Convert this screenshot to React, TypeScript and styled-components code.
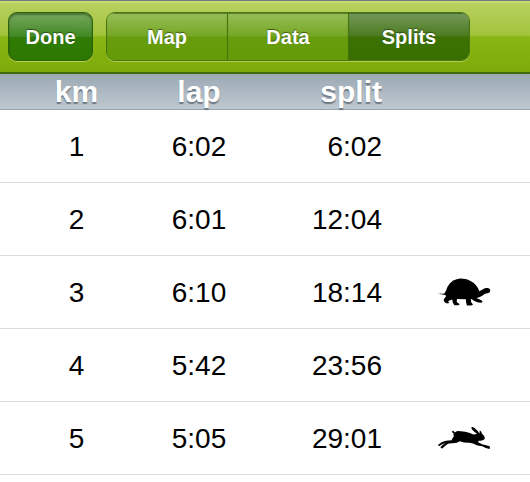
import React, { useState } from "react";
import styled, { createGlobalStyle, css } from "styled-components";

const GlobalStyle = createGlobalStyle`
  body {
    margin: 0;
    background: #fff;
    color: #000;
    font-family: "Liberation Sans", Arial, Helvetica, sans-serif;
  }
`;

const Toolbar = styled.header`
  display: flex;
  align-items: flex-start;
  gap: 13px;
  box-sizing: border-box;
  height: 74px;
  padding: 11px 8px 0;
  border-top: 1px solid #6f7b7c;
  border-bottom: 2px solid #426a0c;
  background: linear-gradient(#c8dd7c 0, #b7d05e 3px, #a2c43c 34px, #8ab512 36px, #7eab0b 100%);
`;

const buttonText = css`
  padding: 0;
  color: #fff;
  font-family: inherit;
  font-size: 20px;
  font-weight: bold;
  line-height: 24px;
  text-shadow: 0 -1px 1px rgba(20, 50, 0, 0.65);
  cursor: pointer;
`;

const DoneButton = styled.button`
  ${buttonText}
  box-sizing: border-box;
  width: 85px;
  height: 49px;
  border: 1px solid #2c6209;
  border-radius: 9px;
  background: linear-gradient(#78a75f, #418824 50%, #2f7b05 52%, #2d7800);
  box-shadow: inset 0 2px 2px rgba(20, 50, 0, 0.45), 0 1px 0 rgba(205, 225, 120, 0.65);
`;

const Segments = styled.div`
  display: flex;
  flex: 0 1 364px;
  box-sizing: border-box;
  height: 49px;
  overflow: hidden;
  border: 1px solid #497511;
  border-radius: 9px;
  box-shadow: 0 1px 0 rgba(205, 225, 120, 0.65);
`;

const Segment = styled.button<{ $active: boolean }>`
  ${buttonText}
  flex: 1;
  border: 0;
  background: ${({ $active }) =>
    $active
      ? "linear-gradient(#74985a, #4c7c21 48%, #3c7203 52%, #396e00)"
      : "linear-gradient(#97bf58, #76a726 48%, #679c0c 52%, #659b08)"};
  box-shadow: inset 0 1px 1px rgba(30, 60, 0, 0.5);

  & + & {
    border-left: 1px solid #47760d;
  }
`;

const SplitTable = styled.table`
  width: 100%;
  table-layout: fixed;
  border-spacing: 0;
`;

const Column = styled.col<{ $width?: number }>`
  width: ${({ $width }) => ($width ? `${$width}px` : "auto")};
`;

const Heading = styled.th<{ $align?: string }>`
  box-sizing: border-box;
  height: 36px;
  padding: 0;
  border-bottom: 1px solid #99a3ab;
  background: linear-gradient(#9ba8b3, #bfc8d1);
  color: #fff;
  font-size: 30px;
  line-height: 35px;
  text-align: ${({ $align = "center" }) => $align};
  text-shadow: 0 2px 1px #6f7a83;
`;

const Cell = styled.td<{ $align?: string }>`
  box-sizing: border-box;
  height: 73px;
  padding: 2px 0 0;
  border-bottom: 1px solid #dcdcdc;
  font-size: 28px;
  line-height: 32px;
  text-align: ${({ $align = "center" }) => $align};
`;

const IconCell = styled(Cell)`
  padding: 0 0 0 16px;
`;

const Animal = styled.svg`
  display: block;
  width: 56px;
  height: 32px;
  margin: 0 auto;
`;

function Turtle() {
  return (
    <Animal viewBox="0 0 56 32" role="img" aria-label="Slowest kilometre">
      <path d="M1.3 16.8Q5 18.2 8.3 17.6Q9 16.4 10 14.7Q11.2 10.5 14 7.3Q17 4 20.7 3.3Q24 2 27 2.7Q31 2.8 34 4.7Q38 6.3 40 9.3Q42.3 12 43.3 15.3L47.5 13Q49 11.5 52 12Q54.5 12.7 54.3 14.7Q54.2 17 51.5 17.2Q48.5 17.4 47 19.3Q44 21.5 40.5 22L45.8 24.4Q47.3 26 44.9 26.8Q41 26.6 38.5 25L34.8 22.8L35.2 26.2L37 28.4Q36 29.7 31 29.6Q30 27.5 29.9 23.2L21 23.1L20.7 26L23.5 28Q24 29.6 18.5 29.2Q16.5 27 16.2 23.5L12.2 25L13 26.8Q12.2 28 9.5 26.8Q7 25.5 8.1 22.8L10 20.5L9.5 18.9Q5 19 1.3 16.8Z" />
    </Animal>
  );
}

function Hare() {
  return (
    <Animal viewBox="0 0 56 32" role="img" aria-label="Fastest kilometre">
      <path d="M16 10.3Q15.7 8.5 17.2 8.7L18.8 10.5Q21 8.8 24 9.2Q29 9 33 10.8L37.5 12.6L41 12L37.5 9Q35.3 7.3 35.3 5.2Q37 4.8 38.5 6L41.7 9L43.6 11.5L43.7 8.5Q45.5 9 46 11.8Q49 14 48.9 16.5Q47.8 18.8 42.5 18.8L42.1 20.2L46 22.2L53.2 23.9Q54.5 24.8 53.7 27L49.8 26.1L46.2 24.2L41.5 23.4Q36.5 21.2 33.4 20.8L28 20.5L24 19.3Q20.5 21.6 15.5 21.2L12 21.7L9.3 23.8L6.6 26.3Q4.7 26.7 4.5 25L7.2 22.5L10 20.9L6.8 22L3.2 24Q1.4 23.8 2.2 22.8L6 20L10 18.8L15.5 18.2Q16 16.5 18 14.3Q16.8 12.5 17.7 11.5Z" />
    </Animal>
  );
}

const tabs = ["Map", "Data", "Splits"];

const laps = [
  { km: 1, lap: "6:02", split: "6:02" },
  { km: 2, lap: "6:01", split: "12:04" },
  { km: 3, lap: "6:10", split: "18:14", icon: <Turtle /> },
  { km: 4, lap: "5:42", split: "23:56" },
  { km: 5, lap: "5:05", split: "29:01", icon: <Hare /> },
];

export default function App() {
  const [active, setActive] = useState("Splits");

  return (
    <>
      <GlobalStyle />
      <Toolbar>
        <DoneButton type="button">Done</DoneButton>
        <Segments role="group" aria-label="View">
          {tabs.map((tab) => (
            <Segment
              key={tab}
              type="button"
              $active={tab === active}
              aria-pressed={tab === active}
              onClick={() => setActive(tab)}
            >
              {tab}
            </Segment>
          ))}
        </Segments>
      </Toolbar>
      <SplitTable>
        <colgroup>
          <Column $width={153} />
          <Column $width={92} />
          <Column $width={137} />
          <Column />
        </colgroup>
        <thead>
          <tr>
            <Heading scope="col">km</Heading>
            <Heading scope="col">lap</Heading>
            <Heading scope="col" $align="right">split</Heading>
            <Heading as="td" />
          </tr>
        </thead>
        <tbody>
          {laps.map(({ km, lap, split, icon }) => (
            <tr key={km}>
              <Cell>{km}</Cell>
              <Cell>{lap}</Cell>
              <Cell $align="right">{split}</Cell>
              <IconCell>{icon}</IconCell>
            </tr>
          ))}
        </tbody>
      </SplitTable>
    </>
  );
}
